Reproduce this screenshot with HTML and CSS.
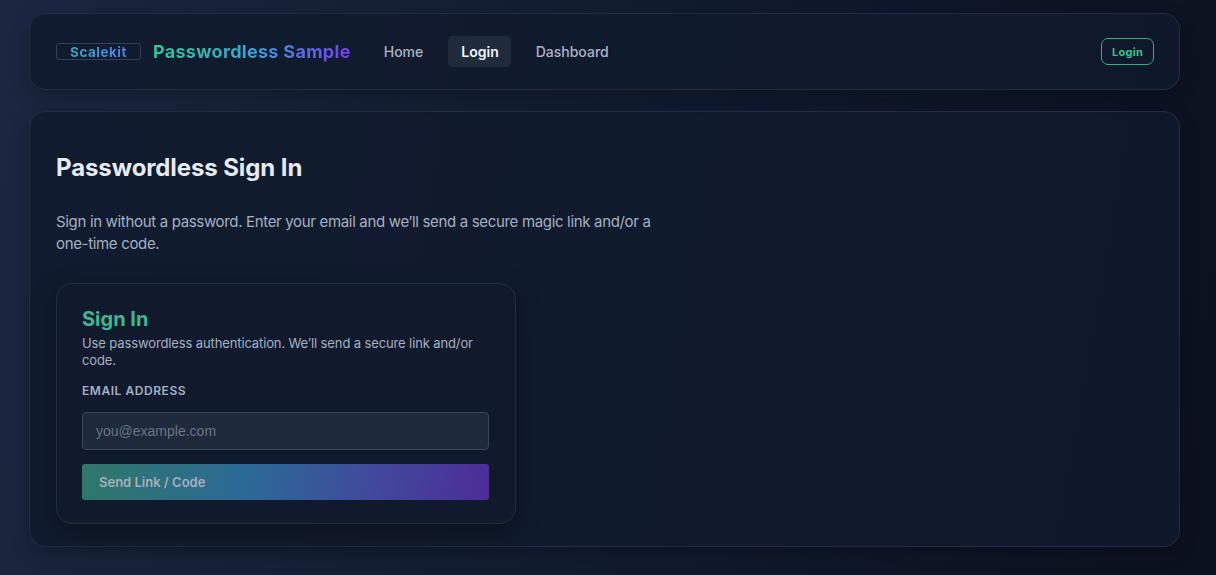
FILE: index.html
```html
<!DOCTYPE html>
<html lang="en">
<head>
<meta charset="utf-8">
<title>Passwordless Sample</title>
<link rel="stylesheet" href="styles.css">
</head>
<body>
<div class="page">
  <header class="navbar">
    <div class="brand">
      <span class="badge"><span class="grad-text">Scalekit</span></span>
      <span class="title grad-text">Passwordless Sample</span>
    </div>
    <nav class="links">
      <a class="link">Home</a>
      <a class="link active">Login</a>
      <a class="link">Dashboard</a>
    </nav>
    <button class="login-btn">Login</button>
  </header>
  <main class="main-card">
    <h1 class="heading">Passwordless Sign In</h1>
    <p class="lead">Sign in without a password. Enter your email and we’ll send a secure magic link and/or a one-time code.</p>
    <section class="signin-card">
      <h2 class="signin-title">Sign In</h2>
      <p class="signin-desc">Use passwordless authentication. We’ll send a secure link and/or code.</p>
      <label class="label">EMAIL ADDRESS</label>
      <div class="input">you@example.com</div>
      <button class="send-btn">Send Link / Code</button>
    </section>
  </main>
</div>
</body>
</html>
```
FILE: styles.css
```css
* { box-sizing: border-box; }
html, body { margin: 0; padding: 0; height: 100%; }
body {
  font-family: Inter, "Noto Sans", sans-serif;
  background: linear-gradient(100deg, #1b2740 0%, #141e33 40%, #0e1627 75%, #0b111d 100%);
  color: #e2e8f0;
  overflow: hidden;
}
.page {
  width: 1151px;
  margin-left: 29px;
  padding-top: 13px;
  display: flex;
  flex-direction: column;
  gap: 21px;
}
.navbar {
  height: 77px;
  border: 1px solid #1f2d45;
  border-radius: 16px;
  background: rgba(17, 26, 45, 0.85);
  display: flex;
  align-items: center;
  padding: 0 25px 0 26px;
  box-shadow: 0 6px 18px rgba(0,0,0,0.25);
}
.brand { display: flex; align-items: center; gap: 12px; }
.badge {
  display: inline-flex;
  align-items: center;
  justify-content: center;
  width: 85px;
  height: 17px;
  border: 1px solid #334155;
  border-radius: 3px;
  font-size: 13.5px;
  font-weight: 700;
  letter-spacing: 0.5px;
}
.grad-text {
  background: linear-gradient(90deg, #34c792 0%, #38a4d8 50%, #7c3aed 100%);
  -webkit-background-clip: text;
  background-clip: text;
  color: transparent;
}
.badge .grad-text {
  background: linear-gradient(90deg, #3aa9c9 0%, #4f7ee8 100%);
  -webkit-background-clip: text;
  background-clip: text;
}
.title { font-size: 18px; font-weight: 700; letter-spacing: 0.3px; }
.links { display: flex; align-items: center; gap: 12px; margin-left: 20px; }
.link {
  font-size: 14px;
  font-weight: 500;
  color: #a9b4c6;
  padding: 7px 13px;
  border-radius: 5px;
  line-height: 17px;
}
.active { background: #1f2a3c; color: #f1f5f9; font-weight: 600; padding: 7px 12px 7px 13px; }
.login-btn {
  margin-left: auto;
  font-family: inherit;
  font-size: 11px;
  font-weight: 700;
  color: #34c38f;
  background: transparent;
  border: 1px solid #2fae80;
  border-radius: 7px;
  width: 53px;
  height: 27px;
  letter-spacing: 0.3px;
  padding: 0;
}
.main-card {
  border: 1px solid #1f2d45;
  border-radius: 16px;
  background: rgba(17, 26, 45, 0.85);
  padding: 40px 25px 22px 26px;
  box-shadow: 0 6px 18px rgba(0,0,0,0.25);
}
.heading {
  margin: 0;
  font-size: 24px;
  font-weight: 700;
  color: #e5eaf3;
  line-height: 32px;
  letter-spacing: -0.1px;
}
.lead {
  margin: 27px 0 0 0;
  max-width: 620px;
  font-size: 15px;
  line-height: 22px;
  color: #a5b0c2;
  letter-spacing: -0.33px;
}
.signin-card {
  margin-top: 28px;
  width: 460px;
  border: 1px solid #1f2d45;
  border-radius: 16px;
  background: rgba(18, 27, 46, 0.9);
  padding: 22px 26px 23px 25px;
  box-shadow: 0 8px 24px rgba(0,0,0,0.35);
}
.signin-title {
  margin: 0;
  font-size: 20px;
  font-weight: 700;
  color: #3cb891;
  line-height: 26px;
}
.signin-desc {
  margin: 3px 0 0 0;
  font-size: 13px;
  line-height: 17px;
  color: #a5b0c2;
  letter-spacing: -0.12px;
}
.label {
  display: block;
  margin-top: 14px;
  font-size: 12px;
  font-weight: 600;
  letter-spacing: 0.55px;
  color: #a5b0c2;
  line-height: 16px;
}
.input {
  margin-top: 13px;
  height: 38px;
  background: #1e293b;
  border: 1px solid #3a4556;
  border-radius: 4px;
  font-size: 14px;
  color: #6b7483;
  padding: 0 13px;
  display: flex;
  align-items: center;
  font-family: "Liberation Sans", Arial, sans-serif;
}
.send-btn {
  display: block;
  width: 100%;
  margin-top: 14px;
  height: 36px;
  border: none;
  border-radius: 3px;
  background: linear-gradient(100deg, #2f7768 0%, #2b6a96 40%, #404a9b 70%, #4d2c98 100%);
  color: #a7b0bd;
  font-family: inherit;
  font-size: 13px;
  font-weight: 600;
  text-align: left;
  padding: 0 17px;
}
```
